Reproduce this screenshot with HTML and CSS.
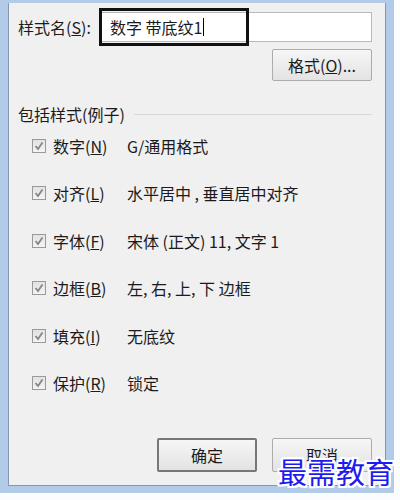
FILE: index.html
```html
<!DOCTYPE html>
<html lang="zh-CN">
  <head>
    <meta charset="utf-8" />
    <title>样式</title>
    <link rel="stylesheet" href="styles.css">
  </head>
  <body>
    <div class="window">
      <div class="panel">
        <div class="name-row">
          <span class="name-label">样式名(<u>S</u>):</span>
          <div class="name-input">数字 带底纹1<span class="caret"></span></div>
          <div class="highlight"></div>
        </div>
        <div class="format-row">
          <button class="btn">格式(<u>O</u>)...</button>
        </div>
        <div class="group-head">
          <span>包括样式(例子)</span>
          <span class="group-line"></span>
        </div>
        <ul class="style-list">
          <li class="style-row">
            <span class="check"><svg viewBox="0 0 12 12"><path d="M2.5 6 L5 9 L9.5 2.5" /></svg></span>
            <span class="item-name">数字(<u>N</u>)</span>
            <span class="item-desc">G/通用格式</span>
          </li>
          <li class="style-row">
            <span class="check"><svg viewBox="0 0 12 12"><path d="M2.5 6 L5 9 L9.5 2.5" /></svg></span>
            <span class="item-name">对齐(<u>L</u>)</span>
            <span class="item-desc">水平居中 , 垂直居中对齐</span>
          </li>
          <li class="style-row">
            <span class="check"><svg viewBox="0 0 12 12"><path d="M2.5 6 L5 9 L9.5 2.5" /></svg></span>
            <span class="item-name">字体(<u>F</u>)</span>
            <span class="item-desc">宋体 (正文) 11, 文字 1</span>
          </li>
          <li class="style-row">
            <span class="check"><svg viewBox="0 0 12 12"><path d="M2.5 6 L5 9 L9.5 2.5" /></svg></span>
            <span class="item-name">边框(<u>B</u>)</span>
            <span class="item-desc">左, 右, 上, 下 边框</span>
          </li>
          <li class="style-row">
            <span class="check"><svg viewBox="0 0 12 12"><path d="M2.5 6 L5 9 L9.5 2.5" /></svg></span>
            <span class="item-name">填充(<u>I</u>)</span>
            <span class="item-desc">无底纹</span>
          </li>
          <li class="style-row">
            <span class="check"><svg viewBox="0 0 12 12"><path d="M2.5 6 L5 9 L9.5 2.5" /></svg></span>
            <span class="item-name">保护(<u>R</u>)</span>
            <span class="item-desc">锁定</span>
          </li>
        </ul>
        <div class="actions">
          <button class="btn btn-default">确定</button>
          <button class="btn">取消</button>
        </div>
      </div>
      <div class="watermark">最需教育</div>
    </div>
  </body>
</html>
```

FILE: styles.css
```css
body {
  margin: 0;
  padding: 0;
  background-color: #fbfcfe;
  font-family: "Noto Sans CJK SC", "Noto Sans", sans-serif;
  font-size: 16px;
  color: #1b1b1b;
}

.window {
  position: relative;
  width: 394px;
  height: 493px;
  box-sizing: border-box;
  padding: 3px 8px 7px 8px;
  background-color: #b2cbe8;
}
.panel {
  height: 100%;
  box-sizing: border-box;
  border: 1px solid #8596ad;
  border-top: none;
  background-color: #f0f0f0;
  padding: 9px 13px 0 9px;
}

.name-row {
  position: relative;
  display: flex;
  align-items: center;
  height: 30px;
}
.name-label {
  width: 83px;
  line-height: 20px;
}
.name-input {
  flex: 1;
  height: 30px;
  box-sizing: border-box;
  border: 1px solid #b9b9b9;
  background-color: #fff;
  padding-left: 8px;
  line-height: 28px;
  display: flex;
  align-items: center;
}
.caret {
  display: inline-block;
  width: 1px;
  height: 18px;
  margin-left: 1px;
  background-color: #000;
}
.highlight {
  position: absolute;
  left: 81px;
  top: -4px;
  width: 150px;
  height: 38px;
  box-sizing: border-box;
  border: 3px solid #111;
}

.format-row {
  display: flex;
  justify-content: flex-end;
  margin-top: 7px;
}
.btn {
  width: 100px;
  height: 32px;
  border: 1px solid #acacac;
  border-radius: 2px;
  background: linear-gradient(#f6f6f6, #e3e3e3);
  font-family: inherit;
  font-size: 16px;
  color: #1b1b1b;
  padding: 0;
}
.btn-default {
  border: 2px solid #777;
}

.group-head {
  display: flex;
  align-items: center;
  margin-top: 23px;
  line-height: 20px;
}
.group-line {
  flex: 1;
  height: 1px;
  margin-left: 9px;
  background-color: #d8d8d8;
}

.style-list {
  list-style: none;
  margin: 12px 0 0 0;
  padding: 0 0 0 14px;
  display: flex;
  flex-direction: column;
  gap: 27.4px;
}
.style-row {
  display: flex;
  align-items: center;
  line-height: 20px;
}
.check {
  width: 14px;
  height: 14px;
  box-sizing: border-box;
  border: 1px solid #9a9a9a;
  background: linear-gradient(#e2e2e2, #f4f4f4);
  margin-right: 7px;
}
.check svg {
  display: block;
  width: 12px;
  height: 12px;
}
.check path {
  fill: none;
  stroke: #868686;
  stroke-width: 1.8;
}
.item-name {
  width: 74px;
}

.actions {
  display: flex;
  justify-content: flex-end;
  gap: 15px;
  margin-top: 45px;
}
.actions .btn {
  height: 34px;
}

.watermark {
  position: absolute;
  right: 0;
  bottom: 1px;
  font-size: 29px;
  letter-spacing: 0;
  color: #1c1cf0;
  text-shadow: -2px 0 #fff, 2px 0 #fff, 0 -2px #fff, 0 2px #fff,
    -2px -2px #fff, 2px 2px #fff, -2px 2px #fff, 2px -2px #fff;
}
```
